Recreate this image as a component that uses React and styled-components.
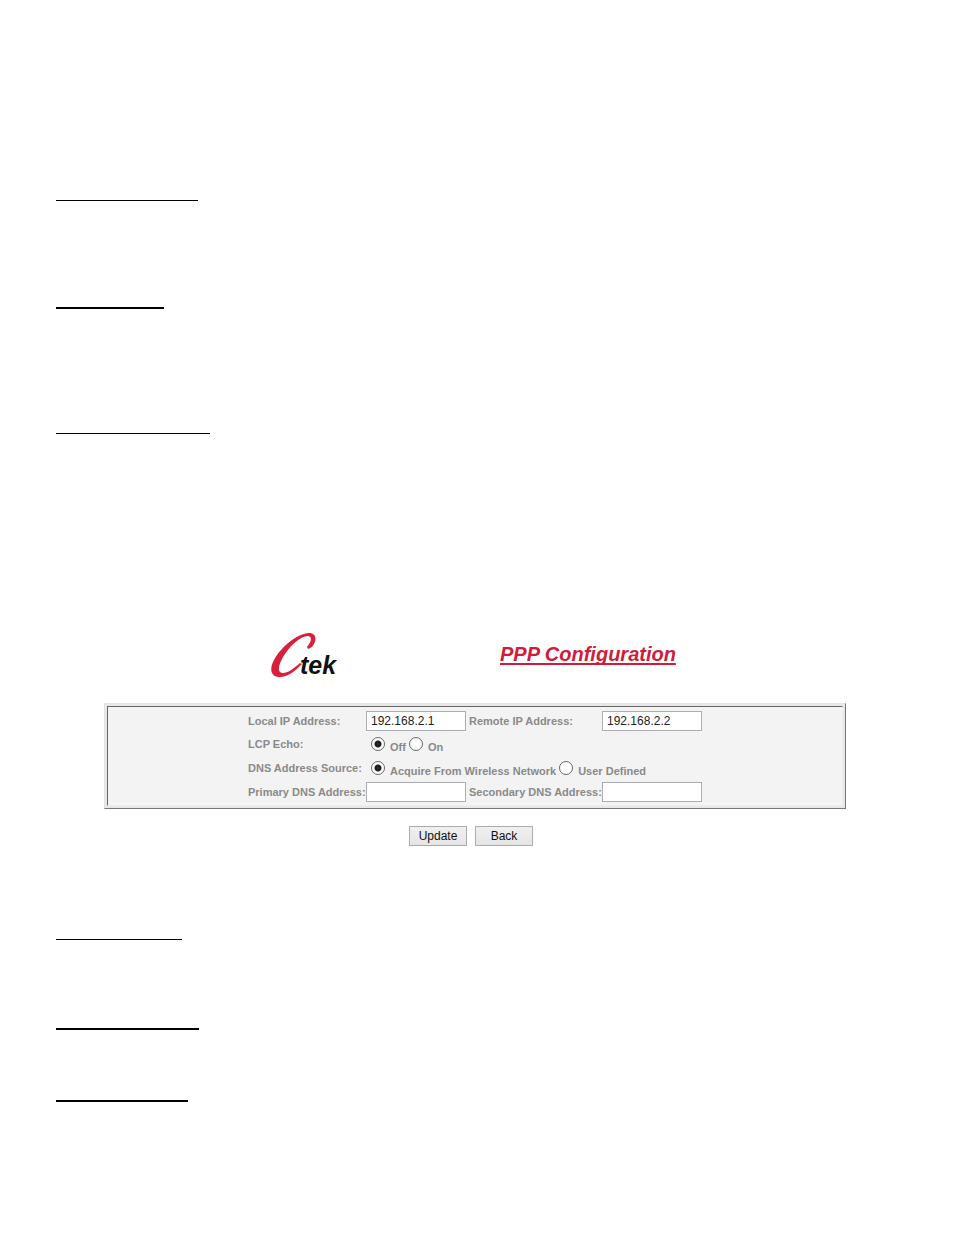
import React from "react";
import styled, { createGlobalStyle } from "styled-components";

const GlobalStyle = createGlobalStyle`
  * { box-sizing: border-box; }
  body {
    margin: 0;
    background: #fff;
    font-family: "Liberation Sans", Arial, sans-serif;
  }
`;

const Page = styled.main`
  display: flex;
  flex-direction: column;
  padding: 200px 56px 132px;
`;

const Rule = styled.hr`
  width: ${(p) => p.$width}px;
  height: ${(p) => p.$weight}px;
  margin: 0 0 ${(p) => p.$after}px;
  border: 0;
  background: #000;
`;

const Config = styled.form`
  margin: 0 52px 93px 48px;
`;

const Header = styled.header`
  display: flex;
  align-items: flex-start;
  gap: 157px;
  height: 71px;
  padding-left: 167px;
`;

const Logo = styled.svg`
  width: 72px;
  height: 48px;
  flex: none;
`;

const Title = styled.h1`
  margin: 10px 0 0;
  color: #d01c38;
  font-size: 20px;
  line-height: 24px;
  font-style: italic;
  text-decoration: underline;
  text-decoration-thickness: 2px;
  text-underline-offset: 2px;
  text-decoration-skip-ink: none;
  white-space: nowrap;
`;

const Panel = styled.div`
  padding: 2px;
  border: 1px solid;
  border-color: #e3e3e3 #777 #777 #e3e3e3;
  background: #e8e8e8;
`;

const Fields = styled.div`
  display: grid;
  grid-template-columns: 118px 100px 136px 100px;
  grid-template-rows: 22px 24px 24px 24px;
  align-items: center;
  padding: 3px 0 1px 140px;
  border: 1px solid;
  border-color: #666 #eee #eee #666;
  background: #f3f3f3;
  color: #8a8a8a;
  font-size: 11px;
  line-height: 14px;
  font-weight: bold;
  white-space: nowrap;
`;

const Label = styled.label`
  padding-left: ${(p) => (p.$second ? 3 : 0)}px;
`;

const TextBox = styled.input`
  width: 100px;
  height: 20px;
  padding: 0 4px;
  border: 1px solid #abadb3;
  border-radius: 0;
  background: #fff;
  color: #222;
  font: 12px "Liberation Sans", Arial, sans-serif;
`;

const Choices = styled.div`
  grid-column: span 3;
  display: flex;
  gap: 3px;
  padding-left: 5px;
`;

const Choice = styled.label`
  display: flex;
  align-items: center;
  gap: 5px;
`;

const ChoiceText = styled.span`
  padding-top: 5px;
`;

const Radio = styled.input`
  appearance: none;
  width: 14px;
  height: 14px;
  margin: 0;
  border: 1px solid #666;
  border-radius: 50%;
  background: #fff;
  &:checked {
    background: radial-gradient(circle, #222 0 3px, #fff 4px);
  }
`;

const Actions = styled.div`
  display: flex;
  justify-content: center;
  gap: 8px;
  margin-top: 17px;
  padding-right: 8px;
`;

const Button = styled.button`
  width: 58px;
  height: 20px;
  padding: 0;
  border: 1px solid #acacac;
  border-radius: 0;
  background: linear-gradient(#f0f0f0, #e5e5e5);
  color: #111;
  font: 12px "Liberation Sans", Arial, sans-serif;
`;

function CtekLogo() {
  return (
    <Logo viewBox="0 0 72 48" role="img" aria-label="Ctek">
      <path
        fill="#d8203a"
        d="M41 15 C46 9 46 1 38 1 C27 1 9 15 2 30 C-2 39 1 45 9 45 C17 45 24 39 31 32 L29 31 C22 37 17 41 12 41 C6 41 7 34 12 25 C19 13 30 4 37 4 C42 5 40 10 36 15 L37 17 Z"
      />
      <text
        x="29"
        y="42"
        fill="#111"
        fontFamily="Liberation Sans, Arial, sans-serif"
        fontSize="25"
        fontWeight="bold"
        fontStyle="italic"
      >
        tek
      </text>
    </Logo>
  );
}

function Option({ name, checked, children }) {
  return (
    <Choice>
      <Radio type="radio" name={name} defaultChecked={checked} />
      <ChoiceText>{children}</ChoiceText>
    </Choice>
  );
}

export default function App() {
  return (
    <>
      <GlobalStyle />
      <Page>
        <Rule $width={142} $weight={1} $after={106} />
        <Rule $width={108} $weight={2} $after={124} />
        <Rule $width={154} $weight={1} $after={198} />
        <Config onSubmit={(e) => e.preventDefault()}>
          <Header>
            <CtekLogo />
            <Title>PPP Configuration</Title>
          </Header>
          <Panel>
            <Fields>
              <Label htmlFor="local-ip">Local IP Address:</Label>
              <TextBox id="local-ip" defaultValue="192.168.2.1" />
              <Label htmlFor="remote-ip" $second>Remote IP Address:</Label>
              <TextBox id="remote-ip" defaultValue="192.168.2.2" />
              <span id="echo">LCP Echo:</span>
              <Choices role="radiogroup" aria-labelledby="echo">
                <Option name="echo" checked>Off</Option>
                <Option name="echo">On</Option>
              </Choices>
              <span id="source">DNS Address Source:</span>
              <Choices role="radiogroup" aria-labelledby="source">
                <Option name="source" checked>Acquire From Wireless Network</Option>
                <Option name="source">User Defined</Option>
              </Choices>
              <Label htmlFor="primary-dns">Primary DNS Address:</Label>
              <TextBox id="primary-dns" />
              <Label htmlFor="secondary-dns" $second>Secondary DNS Address:</Label>
              <TextBox id="secondary-dns" />
            </Fields>
          </Panel>
          <Actions>
            <Button type="submit">Update</Button>
            <Button type="button">Back</Button>
          </Actions>
        </Config>
        <Rule $width={126} $weight={1} $after={88} />
        <Rule $width={143} $weight={2} $after={70} />
        <Rule $width={132} $weight={2} $after={0} />
      </Page>
    </>
  );
}
